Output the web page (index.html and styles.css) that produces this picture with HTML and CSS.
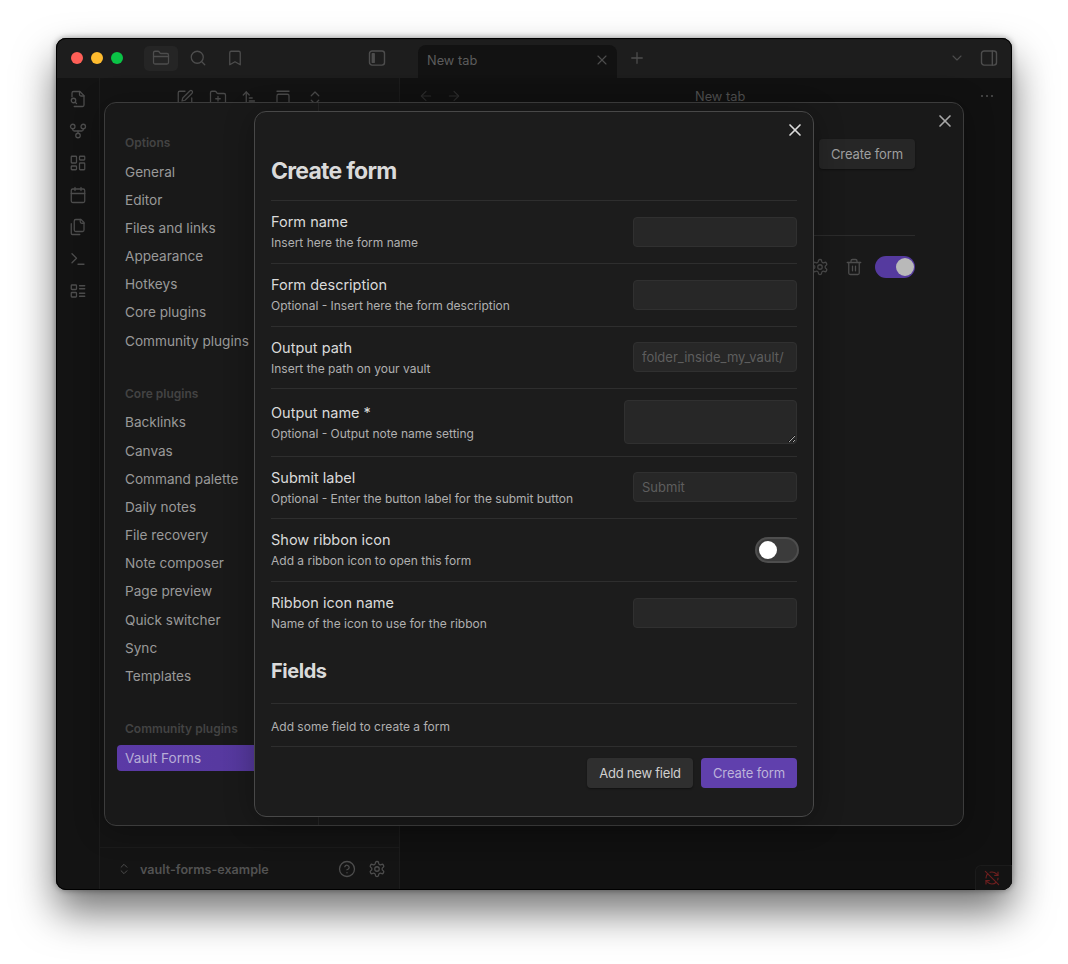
FILE: index.html
```html
<!DOCTYPE html>
<html lang="en">
<head>
<meta charset="utf-8">
<title>Vault Forms</title>
<link rel="stylesheet" href="styles.css">
</head>
<body>
<svg class="defs" width="0" height="0" aria-hidden="true">
  <symbol id="i-folder" viewBox="0 0 24 24"><path d="M20 20a2 2 0 0 0 2-2V8a2 2 0 0 0-2-2h-7.9a2 2 0 0 1-1.69-.9L9.6 3.9A2 2 0 0 0 7.93 3H4a2 2 0 0 0-2 2v13a2 2 0 0 0 2 2Z"/><path d="M2 10h20"/></symbol>
  <symbol id="i-search" viewBox="0 0 24 24"><circle cx="11" cy="11" r="8"/><path d="m21 21-4.3-4.3"/></symbol>
  <symbol id="i-bookmark" viewBox="0 0 24 24"><path d="m19 21-7-4-7 4V5a2 2 0 0 1 2-2h10a2 2 0 0 1 2 2v16z"/></symbol>
  <symbol id="i-sideleft" viewBox="0 0 24 24"><rect x="3" y="3.5" width="18" height="17" rx="3"/><rect class="fill" x="5.5" y="6" width="4" height="12" rx="1"/></symbol>
  <symbol id="i-sideright" viewBox="0 0 24 24"><rect x="3" y="3.5" width="18" height="17" rx="3"/><path d="M16 3.5v17"/></symbol>
  <symbol id="i-filesearch" viewBox="0 0 24 24"><path d="M14 2v4a2 2 0 0 0 2 2h4"/><path d="M4 9V4a2 2 0 0 1 2-2h8.5L20 7.5V20a2 2 0 0 1-2 2H7"/><circle cx="6" cy="14" r="3"/><path d="m10 18-1.8-1.8"/></symbol>
  <symbol id="i-graph" viewBox="0 0 24 24"><circle cx="12" cy="18" r="3"/><circle cx="5" cy="6" r="3"/><circle cx="19" cy="6" r="3"/><path d="M19 9v1c0 1-.6 2-2 2H7c-1.400 0-2-1-2-2V9"/><path d="M12 12v3"/></symbol>
  <symbol id="i-dash" viewBox="0 0 24 24"><rect x="3" y="3" width="7" height="9" rx="1"/><rect x="14" y="3" width="7" height="5" rx="1"/><rect x="14" y="12" width="7" height="9" rx="1"/><rect x="3" y="16" width="7" height="5" rx="1"/></symbol>
  <symbol id="i-cal" viewBox="0 0 24 24"><rect x="3" y="4" width="18" height="18" rx="2"/><path d="M16 2v4M8 2v4M3 10h18"/></symbol>
  <symbol id="i-files" viewBox="0 0 24 24"><path d="M20 7h-3a2 2 0 0 1-2-2V2"/><path d="M9 18a2 2 0 0 1-2-2V4a2 2 0 0 1 2-2h7l4 4v10a2 2 0 0 1-2 2Z"/><path d="M3 7.600v12.800A1.600 1.600 0 0 0 4.600 22h9.800"/></symbol>
  <symbol id="i-term" viewBox="0 0 24 24"><path d="m4 17 6-6-6-6"/><path d="M12 19h8"/></symbol>
  <symbol id="i-list" viewBox="0 0 24 24"><rect x="3" y="4" width="7" height="6" rx="1"/><rect x="3" y="14" width="7" height="6" rx="1"/><path d="M14 5h7M14 9h7M14 15h7M14 19h7"/></symbol>
  <symbol id="i-edit" viewBox="0 0 24 24"><path d="M12 3H5a2 2 0 0 0-2 2v14a2 2 0 0 0 2 2h14a2 2 0 0 0 2-2v-7"/><path d="M18.400 2.600a2.100 2.100 0 0 1 3 3L12 15l-4 1 1-4Z"/></symbol>
  <symbol id="i-folderplus" viewBox="0 0 24 24"><path d="M12 10v6M9 13h6"/><path d="M20 20a2 2 0 0 0 2-2V8a2 2 0 0 0-2-2h-7.900a2 2 0 0 1-1.690-.9L9.600 3.900A2 2 0 0 0 7.930 3H4a2 2 0 0 0-2 2v13a2 2 0 0 0 2 2Z"/></symbol>
  <symbol id="i-sort" viewBox="0 0 24 24"><path d="m3 8 4-4 4 4"/><path d="M7 4v16"/><path d="M11 12h4M11 16h7M11 20h10"/></symbol>
  <symbol id="i-stack" viewBox="0 0 24 24"><path d="M4 3h16"/><rect x="4" y="7" width="16" height="14" rx="2"/></symbol>
  <symbol id="i-updown" viewBox="0 0 24 24"><path d="m7 15 5 5 5-5"/><path d="m7 9 5-5 5 5"/></symbol>
  <symbol id="i-left" viewBox="0 0 24 24"><path d="m12 19-7-7 7-7"/><path d="M19 12H5"/></symbol>
  <symbol id="i-right" viewBox="0 0 24 24"><path d="M5 12h14"/><path d="m12 5 7 7-7 7"/></symbol>
  <symbol id="i-x" viewBox="0 0 24 24"><path d="M18 6 6 18"/><path d="m6 6 12 12"/></symbol>
  <symbol id="i-plus" viewBox="0 0 24 24"><path d="M5 12h14"/><path d="M12 5v14"/></symbol>
  <symbol id="i-chev" viewBox="0 0 24 24"><path d="m6 9 6 6 6-6"/></symbol>
  <symbol id="i-dots" viewBox="0 0 16 16"><circle class="fill" cx="3" cy="8" r="1.100"/><circle class="fill" cx="8" cy="8" r="1.100"/><circle class="fill" cx="13" cy="8" r="1.100"/></symbol>
  <symbol id="i-help" viewBox="0 0 24 24"><circle cx="12" cy="12" r="10"/><path d="M9.090 9a3 3 0 0 1 5.830 1c0 2-3 3-3 3"/><path d="M12 17h.01"/></symbol>
  <symbol id="i-gear" viewBox="0 0 24 24"><path d="M12.220 2h-.44a2 2 0 0 0-2 2v.18a2 2 0 0 1-1 1.730l-.43.25a2 2 0 0 1-2 0l-.15-.08a2 2 0 0 0-2.730.73l-.22.38a2 2 0 0 0 .73 2.730l.15.1a2 2 0 0 1 1 1.720v.51a2 2 0 0 1-1 1.740l-.15.09a2 2 0 0 0-.73 2.730l.22.38a2 2 0 0 0 2.730.73l.15-.08a2 2 0 0 1 2 0l.43.25a2 2 0 0 1 1 1.730V20a2 2 0 0 0 2 2h.44a2 2 0 0 0 2-2v-.18a2 2 0 0 1 1-1.730l.43-.25a2 2 0 0 1 2 0l.15.08a2 2 0 0 0 2.730-.73l.22-.39a2 2 0 0 0-.73-2.730l-.15-.08a2 2 0 0 1-1-1.740v-.5a2 2 0 0 1 1-1.740l.15-.09a2 2 0 0 0 .73-2.730l-.22-.38a2 2 0 0 0-2.730-.73l-.15.08a2 2 0 0 1-2 0l-.43-.25a2 2 0 0 1-1-1.730V4a2 2 0 0 0-2-2z"/><circle cx="12" cy="12" r="3"/></symbol>
  <symbol id="i-trash" viewBox="0 0 24 24"><path d="M3 6h18"/><path d="M19 6v14a2 2 0 0 1-2 2H7a2 2 0 0 1-2-2V6"/><path d="M8 6V4a2 2 0 0 1 2-2h4a2 2 0 0 1 2 2v2"/><path d="M10 11v6M14 11v6"/></symbol>
  <symbol id="i-syncoff" viewBox="0 0 24 24"><path d="M21 8 18.740 5.740A9.750 9.750 0 0 0 12 3c-1 0-1.970.15-2.870.44"/><path d="M8 16H3v5"/><path d="M3 12c0-2.490 1-4.740 2.640-6.360"/><path d="m3 16 2.260 2.260A9.750 9.750 0 0 0 12 21c2.490 0 4.740-1 6.360-2.640"/><path d="M21 12c0 1-.16 1.970-.47 2.870"/><path d="M21 3v5h-5"/><path d="M22 22 2 2"/></symbol>
</svg>

<div class="window">
  <header class="titlebar">
    <div class="lights"><span class="light red"></span><span class="light yellow"></span><span class="light green"></span></div>
    <div class="side-tabs">
      <span class="tb-btn is-on"><svg class="ic ic-18"><use href="#i-folder"/></svg></span>
      <span class="tb-btn"><svg class="ic ic-18"><use href="#i-search"/></svg></span>
      <span class="tb-btn"><svg class="ic ic-18"><use href="#i-bookmark"/></svg></span>
    </div>
    <svg class="ic ic-20 collapse-left"><use href="#i-sideleft"/></svg>
    <div class="tab">
      <span class="tab-title">New tab</span>
      <svg class="ic ic-16"><use href="#i-x"/></svg>
    </div>
    <svg class="ic ic-18 tab-plus"><use href="#i-plus"/></svg>
    <svg class="ic ic-16 tab-chev"><use href="#i-chev"/></svg>
    <svg class="ic ic-20 collapse-right"><use href="#i-sideright"/></svg>
  </header>

  <div class="workspace">
    <nav class="ribbon">
      <svg class="ic ic-18"><use href="#i-filesearch"/></svg>
      <svg class="ic ic-18"><use href="#i-graph"/></svg>
      <svg class="ic ic-18"><use href="#i-dash"/></svg>
      <svg class="ic ic-18"><use href="#i-cal"/></svg>
      <svg class="ic ic-18"><use href="#i-files"/></svg>
      <svg class="ic ic-18"><use href="#i-term"/></svg>
      <svg class="ic ic-18"><use href="#i-list"/></svg>
    </nav>
    <aside class="side">
      <div class="side-tools">
        <svg class="ic ic-18"><use href="#i-edit"/></svg>
        <svg class="ic ic-18"><use href="#i-folderplus"/></svg>
        <svg class="ic ic-18"><use href="#i-sort"/></svg>
        <svg class="ic ic-18"><use href="#i-stack"/></svg>
        <svg class="ic ic-18"><use href="#i-updown"/></svg>
      </div>
      <div class="vault">
        <svg class="ic ic-14"><use href="#i-updown"/></svg>
        <span class="vault-name">vault-forms-example</span>
        <svg class="ic ic-18 vault-help"><use href="#i-help"/></svg>
        <svg class="ic ic-18"><use href="#i-gear"/></svg>
      </div>
    </aside>
    <main class="main">
      <div class="view-head">
        <svg class="ic ic-16"><use href="#i-left"/></svg>
        <svg class="ic ic-16"><use href="#i-right"/></svg>
        <span class="view-title">New tab</span>
        <svg class="ic ic-16 dots"><use href="#i-dots"/></svg>
      </div>
    </main>
  </div>

  <div class="status"><svg class="ic ic-16"><use href="#i-syncoff"/></svg></div>

  <section class="settings">
    <div class="settings-nav">
      <h3 class="nav-head">Options</h3>
      <a class="nav-item">General</a>
      <a class="nav-item">Editor</a>
      <a class="nav-item">Files and links</a>
      <a class="nav-item">Appearance</a>
      <a class="nav-item">Hotkeys</a>
      <a class="nav-item">Core plugins</a>
      <a class="nav-item">Community plugins</a>
      <h3 class="nav-head">Core plugins</h3>
      <a class="nav-item">Backlinks</a>
      <a class="nav-item">Canvas</a>
      <a class="nav-item">Command palette</a>
      <a class="nav-item">Daily notes</a>
      <a class="nav-item">File recovery</a>
      <a class="nav-item">Note composer</a>
      <a class="nav-item">Page preview</a>
      <a class="nav-item">Quick switcher</a>
      <a class="nav-item">Sync</a>
      <a class="nav-item">Templates</a>
      <h3 class="nav-head">Community plugins</h3>
      <a class="nav-item is-active">Vault Forms</a>
    </div>
    <div class="settings-body">
      <button class="btn btn-dim">Create form</button>
      <div class="form-entry">
        <svg class="ic ic-18"><use href="#i-gear"/></svg>
        <svg class="ic ic-18"><use href="#i-trash"/></svg>
        <span class="toggle-on"><span class="knob-on"></span></span>
      </div>
    </div>
    <svg class="ic ic-20 settings-close"><use href="#i-x"/></svg>
  </section>

  <section class="form-modal">
    <svg class="ic ic-20 form-close"><use href="#i-x"/></svg>
    <h1 class="form-title">Create form</h1>
    <div class="row">
      <div class="info"><div class="name">Form name</div><div class="desc">Insert here the form name</div></div>
      <input class="field" type="text">
    </div>
    <div class="row">
      <div class="info"><div class="name">Form description</div><div class="desc">Optional - Insert here the form description</div></div>
      <input class="field" type="text">
    </div>
    <div class="row">
      <div class="info"><div class="name">Output path</div><div class="desc">Insert the path on your vault</div></div>
      <input class="field" type="text" placeholder="folder_inside_my_vault/">
    </div>
    <div class="row">
      <div class="info"><div class="name">Output name *</div><div class="desc">Optional - Output note name setting</div></div>
      <textarea class="field area"></textarea>
    </div>
    <div class="row">
      <div class="info"><div class="name">Submit label</div><div class="desc">Optional - Enter the button label for the submit button</div></div>
      <input class="field" type="text" placeholder="Submit">
    </div>
    <div class="row">
      <div class="info"><div class="name">Show ribbon icon</div><div class="desc">Add a ribbon icon to open this form</div></div>
      <span class="toggle-off"><span class="knob-off"></span></span>
    </div>
    <div class="row">
      <div class="info"><div class="name">Ribbon icon name</div><div class="desc">Name of the icon to use for the ribbon</div></div>
      <input class="field" type="text">
    </div>
    <h2 class="fields-title">Fields</h2>
    <div class="empty">Add some field to create a form</div>
    <div class="actions">
      <button class="btn btn-plain">Add new field</button>
      <button class="btn btn-cta">Create form</button>
    </div>
  </section>
</div>
</body>
</html>
```

FILE: styles.css
```css
* { box-sizing: border-box; }
html, body { margin: 0; height: 964px; overflow: hidden; }
body {
  padding: 38px 56px 0;
  background: #fff;
  font-family: Inter, "Liberation Sans", sans-serif;
  font-size: 14px;
}
.defs { position: absolute; }
h1, h2, h3 { margin: 0; }

.ic {
  flex: none;
  fill: none;
  stroke: #4d4d4d;
  stroke-width: 1.7;
  stroke-linecap: round;
  stroke-linejoin: round;
  display: block;
}
symbol .fill { fill: #4d4d4d; stroke: none; }
.ic-14 { width: 14px; height: 14px; }
.ic-16 { width: 16px; height: 16px; }
.ic-18 { width: 18px; height: 18px; }
.ic-20 { width: 20px; height: 20px; }

.window {
  position: relative;
  width: 956px;
  height: 852px;
  border-radius: 10px;
  background: #121212;
  overflow: hidden;
  display: flex;
  flex-direction: column;
  box-shadow: inset 0 0 0 1px #3e3e3e;
  outline: 1px solid #000;
  outline-offset: -1px;
}
body::before {
  content: "";
  position: absolute;
  left: 56px;
  top: 38px;
  width: 956px;
  height: 852px;
  border-radius: 10px;
  box-shadow: 0 22px 40px rgba(0, 0, 0, .55), 0 0 6px rgba(0, 0, 0, .4);
}

.titlebar {
  flex: none;
  height: 40px;
  background: #1d1d1d;
  display: flex;
  align-items: center;
  padding-left: 15px;
}
.lights { display: flex; gap: 8px; }
.light { width: 12px; height: 12px; border-radius: 50%; }
.red { background: #fe5f57; }
.yellow { background: #febb2e; }
.green { background: #0ac346; }
.side-tabs { display: flex; gap: 3px; margin-left: 21px; }
.tb-btn {
  width: 34px;
  height: 25px;
  border-radius: 5px;
  display: flex;
  align-items: center;
  justify-content: center;
}
.is-on { background: #252525; }
.collapse-left { margin-left: 115px; }
.tab {
  align-self: flex-end;
  width: 199px;
  height: 33px;
  margin-left: 31px;
  background: #121212;
  border-radius: 8px 8px 0 0;
  display: flex;
  align-items: center;
  justify-content: space-between;
  padding: 0 7px 0 9px;
  color: #5c5c5c;
  font-size: 12.800px;
}
.tab-title { position: relative; top: -1px; }
.tab .ic { position: relative; top: -2px; }
.tab-plus { margin-left: 11px; }
.tab-chev { margin-left: auto; }
.collapse-right { margin: 0 13px 0 14px; }

.workspace { flex: 1; display: flex; min-height: 0; }
.ribbon {
  flex: none;
  width: 44px;
  background: #131313;
  border-right: 1px solid #1c1c1c;
  display: flex;
  flex-direction: column;
  align-items: center;
  gap: 14px;
  padding-top: 12px;
}
.side {
  flex: none;
  width: 300px;
  background: #141414;
  border-right: 1px solid #1c1c1c;
  display: flex;
  flex-direction: column;
  justify-content: space-between;
}
.side-tools { display: flex; gap: 14.500px; padding: 11px 0 0 76px; }
.vault {
  height: 43px;
  border-top: 1px solid #1b1b1b;
  display: flex;
  align-items: center;
  padding: 0 13px 0 17px;
  color: #525252;
  font-size: 12.600px;
  font-weight: 600;
}
.vault-name { margin-left: 9px; flex: 1; }
.vault-help { margin-right: 12px; }

.main { flex: 1; background: #111; }
.view-head {
  position: relative;
  display: flex;
  align-items: center;
  gap: 12px;
  height: 36px;
  padding-left: 18px;
  color: #545454;
  font-size: 12.800px;
}
.view-head .ic { stroke: #2e2e2e; }
.view-title { margin-left: 221px; }
.view-head .dots { margin-left: auto; margin-right: 17px; }

.status {
  position: absolute;
  right: 0;
  bottom: 0;
  width: 37px;
  height: 25px;
  padding-right: 5px;
  background: #131313;
  border: 1px solid #1b1b1b;
  border-right: 0;
  border-bottom: 0;
  border-top-left-radius: 6px;
  display: flex;
  align-items: center;
  justify-content: center;
}
.status .ic { stroke: #6e1f1f; }

.settings {
  position: absolute;
  left: 48px;
  top: 64px;
  width: 860px;
  height: 724px;
  background: #191919;
  border: 1px solid #3c3c3c;
  border-radius: 12px;
  display: flex;
  box-shadow: 0 4px 30px rgba(0, 0, 0, .3);
}
.settings-nav {
  flex: none;
  width: 214px;
  padding: 27px 0 0 12px;
  border-right: 1px solid #262626;
}
.nav-head {
  height: 28.500px;
  margin: 27px 0 0;
  padding-left: 8px;
  line-height: 26px;
  font-size: 12px;
  font-weight: 600;
  color: #434343;
}
.nav-head:first-child { margin-top: 0; }
.nav-item {
  display: block;
  height: 26.200px;
  margin-bottom: 2px;
  padding-left: 8px;
  line-height: 26px;
  font-size: 13.600px;
  color: #999;
}
.is-active {
  width: 200px;
  background: linear-gradient(90deg, #5b3aa6, #53389a);
  border-radius: 4px;
  color: #b7acd6;
}
.settings-body {
  flex: 1;
  padding: 36px 48px 0 0;
  display: flex;
  flex-direction: column;
  align-items: flex-end;
}
.form-entry {
  width: 101px;
  margin-top: 66px;
  padding-top: 20px;
  border-top: 1px solid #2b2b2b;
  display: flex;
  align-items: center;
  justify-content: flex-end;
  gap: 16px;
}
.settings-close { position: absolute; right: 8px; top: 8px; stroke: #a8a8a8; stroke-width: 2; }

.btn {
  height: 30px;
  border: 0;
  border-radius: 4px;
  font: 400 13px Inter, "Liberation Sans", sans-serif;
  padding: 0;
}
.btn-dim { background: #262626; color: #9f9f9f; box-shadow: 0 1px 2px rgba(0,0,0,.4); width: 96px; letter-spacing: -.1px; }
.btn-plain { background: #2f2f2f; color: #d0d0d0; box-shadow: 0 1px 2px rgba(0,0,0,.4); width: 106px; letter-spacing: -.22px; }
.btn-cta { background: #6040ad; color: #bdb3da; width: 96px; letter-spacing: -.1px; }

.toggle-on {
  flex: none;
  width: 40px;
  height: 22px;
  border-radius: 11px;
  background: #553a9f;
  display: flex;
  align-items: center;
  justify-content: flex-end;
  padding-right: 1px;
  margin-left: -4px;
}
.knob-on { width: 18px; height: 18px; border-radius: 50%; background: #b9b9b9; }

.form-modal {
  position: absolute;
  left: 198px;
  top: 73px;
  width: 560px;
  height: 706px;
  padding: 0 16px;
  background: #1c1c1c;
  border: 1px solid #484848;
  border-radius: 12px;
  display: flex;
  flex-direction: column;
  box-shadow: 0 4px 30px rgba(0, 0, 0, .3);
}
.form-close { position: absolute; right: 8px; top: 8px; stroke: #dcdcdc; stroke-width: 2; }
.form-title {
  margin-top: 44px;
  height: 44.400px;
  line-height: 30px;
  font-size: 23px;
  font-weight: 700;
  letter-spacing: -.75px;
  color: #dadada;
}
.row {
  border-top: 1px solid #2e2e2e;
  display: flex;
  align-items: center;
  justify-content: space-between;
  padding: 11px 0;
}
.name { font-size: 14.500px; line-height: 19px; margin-bottom: 3px; font-weight: 400; color: #dadada; }
.desc { font-size: 12px; line-height: 17.600px; color: #b0b0b0; }
.field {
  width: 164px;
  height: 30px;
  background: #272727;
  border: 1px solid #303030;
  border-radius: 4px;
  padding: 0 8px;
  color: #dadada;
  font: 13px Inter, "Liberation Sans", sans-serif;
  outline: 0;
}
.field::placeholder { color: #5e5e5e; opacity: 1; }
.area { width: 173px; height: 44px; display: block; margin: 0 0 .5px; }
.toggle-off {
  width: 40px;
  height: 22px;
  border-radius: 11px;
  background: #3b3b3b;
  box-shadow: 0 0 0 2px #4e4e4e;
  display: flex;
  align-items: center;
  padding-left: 2px;
}
.knob-off { width: 18px; height: 18px; border-radius: 50%; background: #fff; }
.fields-title {
  height: 59.500px;
  line-height: 57px;
  font-size: 20px;
  font-weight: 700;
  letter-spacing: -.45px;
  color: #dadada;
}
.empty {
  height: 44px;
  line-height: 45px;
  border-top: 1px solid #2e2e2e;
  border-bottom: 1px solid #2e2e2e;
  font-size: 12px;
  color: #b0b0b0;
}
.actions { display: flex; justify-content: flex-end; gap: 8px; margin-top: 11px; }
```
